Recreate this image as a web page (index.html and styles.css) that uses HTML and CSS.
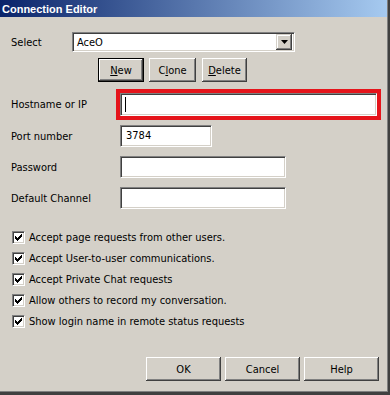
FILE: index.html
```html
<!DOCTYPE html>
<html lang="en">
<head>
  <meta charset="UTF-8" />
  <title>Connection Editor</title>
  <link rel="stylesheet" href="styles.css">
</head>
<body>
  <div class="window">
    <div class="titlebar">
      <span class="title">Connection Editor</span>
    </div>

    <div class="content">
      <div class="select-row">
        <span class="select-label">Select</span>
        <div class="combo">
          <span class="combo-text">AceO</span>
          <span class="combo-btn">
            <svg width="7" height="4" viewBox="0 0 7 4"><path d="M0 0h7L3.5 4z" fill="#000"/></svg>
          </span>
        </div>
      </div>

      <div class="edit-buttons">
        <button class="btn btn-default btn-new"><u>N</u>ew</button>
        <button class="btn btn-clone">C<u>l</u>one</button>
        <button class="btn btn-delete"><u>D</u>elete</button>
      </div>

      <div class="form">
        <span class="label">Hostname or IP</span>
        <div class="field field-host highlight"><span class="caret"></span></div>

        <span class="label">Port number</span>
        <div class="field field-port">3784</div>

        <span class="label">Password</span>
        <div class="field field-wide"></div>

        <span class="label">Default Channel</span>
        <div class="field field-wide"></div>
      </div>

      <ul class="checks">
        <li><span class="checkbox"></span>Accept page requests from other users.</li>
        <li><span class="checkbox"></span>Accept User-to-user communications.</li>
        <li><span class="checkbox"></span>Accept Private Chat requests</li>
        <li><span class="checkbox"></span>Allow others to record my conversation.</li>
        <li><span class="checkbox"></span>Show login name in remote status requests</li>
      </ul>

      <div class="footer">
        <button class="btn btn-dialog">OK</button>
        <button class="btn btn-dialog">Cancel</button>
        <button class="btn btn-dialog">Help</button>
      </div>
    </div>
  </div>
</body>
</html>
```

FILE: styles.css
```css
:root {
  --face: #d4d0c8;
  --shadow: #808080;
  --dark: #404040;
  --light: #ffffff;
}

* {
  box-sizing: border-box;
}

html, body {
  margin: 0;
  padding: 0;
  width: 390px;
  height: 395px;
  overflow: hidden;
  background: var(--face);
  font-family: 'DejaVu Sans Condensed', 'DejaVu Sans', sans-serif;
  font-size: 11px;
  color: #000;
}

.window {
  width: 390px;
  height: 395px;
  display: flex;
  flex-direction: column;
  border-right: 2px solid var(--dark);
  border-bottom: 3px solid var(--dark);
  box-shadow: inset -1px -1px var(--shadow);
}

.titlebar {
  height: 17px;
  margin-right: 1px;
  display: flex;
  align-items: center;
  padding-left: 2px;
  background: linear-gradient(to right, #0a246a, #a6caf0);
}

.title {
  color: #fff;
  font-family: 'Liberation Sans', Arial, sans-serif;
  font-weight: bold;
  font-size: 11px;
}

.content {
  padding-left: 11px;
  display: flex;
  flex-direction: column;
}

/* sunken edit look */
.combo, .field {
  background: #fff;
  border-top: 1px solid var(--shadow);
  border-left: 1px solid var(--shadow);
  border-bottom: 1px solid var(--light);
  border-right: 1px solid var(--light);
  box-shadow: inset 1px 1px var(--dark), inset -1px -1px var(--face);
}

.select-row {
  margin-top: 15px;
  display: flex;
  align-items: center;
}

.select-label {
  width: 61px;
}

.combo {
  width: 223px;
  height: 20px;
  display: flex;
  align-items: center;
  padding: 2px;
}

.combo-text {
  flex: 1;
  padding-left: 2px;
}

.combo-btn {
  width: 16px;
  height: 16px;
  display: flex;
  align-items: center;
  justify-content: center;
  background: var(--face);
  box-shadow: inset -1px -1px var(--dark), inset 1px 1px var(--face), inset -2px -2px var(--shadow), inset 2px 2px var(--light);
}

/* raised button look */
.btn {
  font: inherit;
  color: #000;
  background: var(--face);
  border: none;
  padding: 0;
  box-shadow: inset -1px -1px var(--dark), inset 1px 1px var(--light), inset -2px -2px var(--shadow), inset 2px 2px var(--face);
}

.btn-default {
  border: 1px solid #000;
}

.edit-buttons {
  margin-top: 6px;
  margin-left: 87px;
  display: flex;
  gap: 5px;
}

.edit-buttons .btn {
  height: 24px;
}

.btn-new { width: 46px; }
.btn-clone { width: 47px; }
.btn-delete { width: 45px; margin-left: 1px; }

.form {
  margin-top: 11px;
  display: grid;
  grid-template-columns: 109px auto;
  row-gap: 9px;
  align-items: center;
}

.field {
  height: 22px;
  padding: 3px 5px 0;
}

.field-host {
  width: 257px;
  height: 23px;
  display: flex;
  align-items: center;
  padding: 0 4px;
}

.highlight {
  outline: 4px solid #e5141b;
  outline-offset: 0;
}

.caret {
  width: 1px;
  height: 15px;
  background: #000;
}

.field-port {
  width: 92px;
}

.field-wide {
  width: 166px;
}

.checks {
  list-style: none;
  margin: 18px 0 0 1px;
  padding: 0;
}

.checks li {
  height: 21px;
  display: flex;
  align-items: center;
  gap: 4px;
}

.checkbox {
  width: 13px;
  height: 13px;
  flex: none;
  background-color: #fff;
  background-image: url("data:image/svg+xml;utf8,<svg xmlns='http://www.w3.org/2000/svg' width='13' height='13'><path d='M3 5h1v3h-1zM4 6h1v3h-1zM5 7h1v3h-1zM6 6h1v3h-1zM7 5h1v3h-1zM8 4h1v3h-1zM9 3h1v3h-1z' fill='black'/></svg>");
  border-top: 1px solid var(--shadow);
  border-left: 1px solid var(--shadow);
  border-bottom: 1px solid var(--light);
  border-right: 1px solid var(--light);
  box-shadow: inset 1px 1px var(--dark), inset -1px -1px var(--face);
  background-position: -1px -1px;
}

.footer {
  margin-top: 25px;
  margin-left: 135px;
  display: flex;
  gap: 4px;
}

.btn-dialog {
  width: 75px;
  height: 24px;
}
```
